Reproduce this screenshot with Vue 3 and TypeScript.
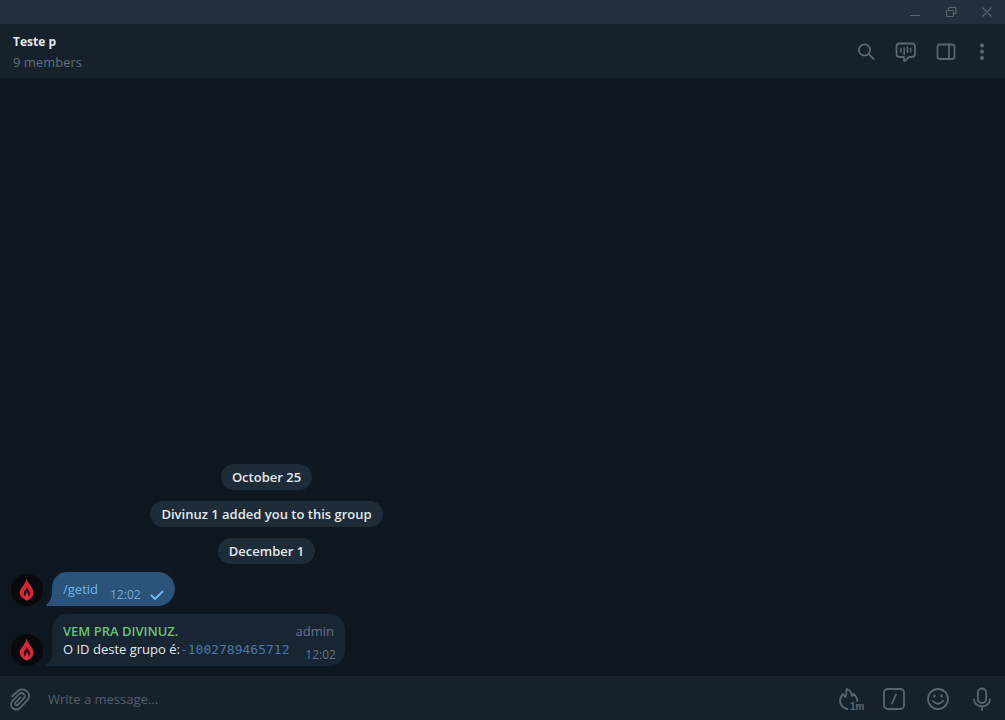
<script setup lang="ts">
import { ref } from 'vue'

interface Message {
  id: number
  own: boolean
  author?: string
  role?: string
  text: string
  command?: boolean
  code?: string
  time: string
}

const notices: string[] = ['October 25', 'Divinuz 1 added you to this group', 'December 1']

const messages: Message[] = [
  { id: 1, own: true, text: '/getid', command: true, time: '12:02' },
  {
    id: 2,
    own: false,
    author: 'VEM PRA DIVINUZ.',
    role: 'admin',
    text: 'O ID deste grupo é:',
    code: '-1002789465712',
    time: '12:02',
  },
]

const draft = ref('')
</script>

<template>
  <div class="window">
    <div class="titlebar">
      <button type="button" aria-label="Minimize">
        <svg width="36" height="24" viewBox="0 0 36 24"><path d="M13.500 15.500h9" /></svg>
      </button>
      <button type="button" aria-label="Restore">
        <svg width="36" height="24" viewBox="0 0 36 24">
          <rect x="13.500" y="10.500" width="7" height="6" rx="1" />
          <path d="M15.500 10.500V8.500q0-1 1-1h5.500q1 0 1 1v4q0 1-1 1h-1.500" />
        </svg>
      </button>
      <button type="button" aria-label="Close">
        <svg width="36" height="24" viewBox="0 0 36 24"><path d="M14 8l8 8M22 8l-8 8" /></svg>
      </button>
    </div>

    <header class="header">
      <div class="chat-info">
        <h1>Teste p</h1>
        <p>9 members</p>
      </div>
      <div class="header-actions">
        <button type="button" aria-label="Search">
          <svg width="24" height="24" viewBox="0 0 24 24">
            <circle cx="10.500" cy="10" r="5.600" /><path d="M14.700 14.200l5 4.800" />
          </svg>
        </button>
        <button type="button" aria-label="Voice chat">
          <svg width="24" height="24" viewBox="0 0 24 24">
            <path d="M5.500 3.500h12.500q3 0 3 3v7.500q0 3-3 3h-3l-4 3.800q-1 .8-1-.5V17h-4.500q-3 0-3-3V6.500q0-3 3-3z" />
            <path d="M7 8.500v3.500M10.200 8v6.500M13.400 7v5.500M16.600 8.500v3.500" stroke-width="1.600" />
          </svg>
        </button>
        <button type="button" aria-label="Toggle side panel">
          <svg width="24" height="24" viewBox="0 0 24 24">
            <rect x="3.500" y="4.500" width="17" height="14.500" rx="2.500" /><path d="M15 4.500V19" />
          </svg>
        </button>
        <button type="button" class="more" aria-label="More options">
          <svg width="24" height="24" viewBox="0 0 24 24" class="solid">
            <circle cx="12" cy="5.500" r="2.100" /><circle cx="12" cy="11.700" r="2.100" /><circle cx="12" cy="18" r="2.100" />
          </svg>
        </button>
      </div>
    </header>

    <main class="history">
      <div class="column">
        <div v-for="notice in notices" :key="notice" class="notice">{{ notice }}</div>
        <article v-for="m in messages" :key="m.id" class="message" :class="{ own: m.own }">
          <svg class="avatar" width="32" height="32" viewBox="0 0 32 32" aria-hidden="true">
            <circle cx="16" cy="16" r="16" fill="#07090c" />
            <path
              d="M15.500 4.500C16.500 9 22.500 13.500 22.500 18.500C22.500 22.500 20 25 16 26.500C12 25 8.800 22.500 8.800 18.500C8.800 14 14.500 11 15.500 4.500Z"
              fill="#cf2a38"
            />
            <path
              d="M15.800 12.500C16.500 15.500 19 17 19 19.500C19 21.500 18 22.500 16 23C13.800 22.500 12.800 21 12.800 19.200C12.800 17 15.500 16 15.800 12.500Z"
              fill="#32090f"
            />
            <path d="M16 26.500C12.500 23 15.800 21.500 15.500 17.500C18 20.500 18 23.500 16 26.500Z" fill="#e03642" />
          </svg>
          <div class="bubble">
            <svg class="tail" width="6" height="16" viewBox="0 0 6 16" aria-hidden="true">
              <path d="M6 0C6 8 4 12 .5 14.500Q-.5 16 1 16H6Z" />
            </svg>
            <div class="body">
              <div v-if="m.author" class="author">{{ m.author }}</div>
              <div class="text">
                <a v-if="m.command" href="#">{{ m.text }}</a>
                <template v-else>{{ m.text }}</template>
                <code v-if="m.code">{{ m.code }}</code>
              </div>
            </div>
            <div class="meta">
              <span v-if="m.role" class="role">{{ m.role }}</span>
              <span class="time">
                {{ m.time }}
                <svg v-if="m.own" width="14" height="12" viewBox="0 0 14 12" aria-label="Sent">
                  <path d="M1.500 6.500l3.500 3.500L12.500 2.500" />
                </svg>
              </span>
            </div>
          </div>
        </article>
      </div>
    </main>

    <footer class="composer">
      <button type="button" aria-label="Attach file">
        <svg width="24" height="24" viewBox="0 0 24 24">
          <path d="M4 9.500L9.500 4.300C15.500-1 24.500 6 19.800 12.600L12.500 20.500C7.500 25.500 0 19.500 4.200 14.200L11 7.200C14.500 4.200 18.500 8.300 15.700 11.500L10 17.600C8.200 19.200 6.200 17 7.700 15.300L12.500 10.300" />
        </svg>
      </button>
      <input v-model="draft" type="text" aria-label="Message" placeholder="Write a message..." />
      <button type="button" class="timer" aria-label="Auto-delete after 1 month">
        <svg width="28" height="26" viewBox="0 0 28 26">
          <path d="M9.500 23C5 22 1.800 18.500 2 14.500C2.200 11.500 3.500 9.500 5 8C5.500 9.500 6.300 10.500 7.300 11C9 8.500 7.800 6 8.800 3C12.500 4.500 13.700 7 14 10Q15.200 9.500 15.500 8C18 10 19.200 12.500 19.200 15" />
          <text x="12" y="24">1m</text>
        </svg>
      </button>
      <button type="button" aria-label="Bot commands">
        <svg width="24" height="24" viewBox="0 0 24 24">
          <rect x="2" y="2" width="20" height="20" rx="3.500" /><path d="M14 7.500l-4 9" />
        </svg>
      </button>
      <button type="button" aria-label="Emoji">
        <svg width="24" height="24" viewBox="0 0 24 24">
          <circle cx="12" cy="12" r="10" />
          <path d="M6.800 14q5.200 5.500 10.400 0" />
          <path d="M8.500 8.800v.4M15.500 8.800v.4" stroke-width="2.400" />
        </svg>
      </button>
      <button type="button" aria-label="Record voice message">
        <svg width="24" height="24" viewBox="0 0 24 24">
          <rect x="7.800" y="1.500" width="8.400" height="14.500" rx="4.200" />
          <path d="M4 12.500C4.200 21.500 19.800 21.500 20 12.500M12 19.500v3.500" />
        </svg>
      </button>
    </footer>
  </div>
</template>

<style>
html,
body {
  margin: 0;
  background: #0e1620;
}
</style>

<style scoped>
.window {
  display: flex;
  flex-direction: column;
  min-height: 100vh;
  background: #0e1620;
  color: #e4e8ec;
  font-family: "Open Sans", "Noto Sans", sans-serif;
  font-size: 13px;
  line-height: 18px;
}

button {
  display: flex;
  align-items: center;
  justify-content: center;
  margin: 0;
  padding: 0;
  border: 0;
  background: none;
  color: #5a6570;
  cursor: pointer;
}

svg {
  display: block;
  flex: none;
  fill: none;
  stroke: currentColor;
  stroke-width: 1.8;
  stroke-linecap: round;
  stroke-linejoin: round;
}

.titlebar {
  display: flex;
  justify-content: flex-end;
  height: 24px;
  background: #242f3d;
}

.titlebar svg {
  stroke-width: 1.2;
}

.header {
  display: flex;
  align-items: center;
  justify-content: space-between;
  box-sizing: border-box;
  height: 54px;
  padding: 1px 11px 0 13px;
  background: #17212b;
}

h1,
p {
  margin: 0;
  font-size: 13px;
  line-height: 20px;
}

h1 {
  font-size: 12px;
  font-weight: 700;
}

p {
  color: #5f6e7d;
}

.header-actions {
  display: flex;
  gap: 16px;
}

.header-actions .more {
  margin-left: -4px;
}

.solid {
  fill: currentColor;
  stroke: none;
}

.history {
  display: flex;
  flex: 1;
  flex-direction: column;
  justify-content: flex-end;
  padding-bottom: 10px;
}

.column {
  display: flex;
  flex-direction: column;
  align-items: center;
  box-sizing: border-box;
  width: 100%;
  max-width: 533px;
  padding: 0 11px;
}

.notice {
  margin-bottom: 11px;
  padding: 4px 11px;
  border-radius: 13px;
  background: #1e2c39;
  font-weight: 600;
}

.notice + .message {
  margin-top: -3px;
}

.message {
  display: flex;
  align-items: flex-end;
  align-self: flex-start;
  gap: 9px;
}

.message + .message {
  margin-top: 8px;
}

.avatar,
.tail {
  stroke: none;
}

.bubble {
  position: relative;
  display: flex;
  justify-content: space-between;
  gap: 6px;
  padding: 8px 11px;
  border-radius: 15px 15px 15px 0;
  background: #182533;
}

.own .bubble {
  gap: 12px;
  border-radius: 15px 17px 17px 0;
  background: #2b5278;
}

.tail {
  position: absolute;
  right: 100%;
  bottom: 0;
  fill: #182533;
}

.own .tail {
  fill: #2b5278;
}

.author {
  color: #6cc276;
  font-weight: 600;
}

.text {
  white-space: nowrap;
}

a {
  color: #70b5ec;
  text-decoration: none;
}

code {
  color: #467aa8;
  font-family: "DejaVu Sans Mono", "Liberation Mono", monospace;
  font-size: 13px;
  line-height: 16px;
}

.meta {
  display: flex;
  flex-direction: column;
  justify-content: space-between;
  align-items: flex-end;
  margin-bottom: -6px;
  color: #65768a;
}

.own .meta {
  justify-content: flex-end;
  color: #7da8d3;
}

.time {
  display: flex;
  align-items: center;
  gap: 9px;
  font-size: 12px;
}

.bubble .meta .time {
  margin-right: -2px;
}

.own .bubble .meta .time {
  margin-right: 0;
}

.time svg {
  stroke: #73b9f5;
}

.composer {
  display: flex;
  align-items: center;
  gap: 20px;
  box-sizing: border-box;
  height: 44px;
  padding: 2px 11px 0 8px;
  background: #17212b;
}

.composer input {
  flex: 1;
  min-width: 0;
  margin-left: -4px;
  padding: 0;
  border: 0;
  outline: 0;
  background: none;
  color: #e4e8ec;
  font: inherit;
}

.composer input::placeholder {
  color: #53606d;
  opacity: 1;
}

.timer {
  margin-right: -4px;
}

.timer text {
  fill: currentColor;
  stroke: none;
  font-size: 10px;
  font-weight: 700;
}
</style>
